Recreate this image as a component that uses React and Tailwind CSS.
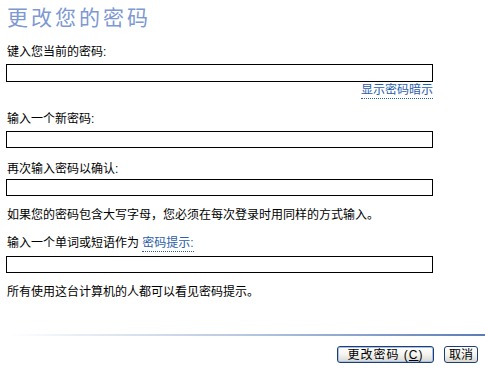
export default function App() {
  const font = { fontFamily: '"Liberation Sans", "Noto Sans CJK SC", sans-serif' };

  return (
    <div
      className="w-[485px] h-[372px] bg-white text-black text-[12px] leading-[14px] overflow-hidden"
      style={font}
    >
      {/* ==== FORM ==== */}
      <div className="pl-[6px] w-[433px]">
        <h1 className="mt-[4px] h-[28px] text-[21px] leading-[28px] tracking-[3px] text-[#7d98d2] font-normal pl-[1px]">
          更改您的密码
        </h1>

        <p className="mt-[13px] pl-[1px]">键入您当前的密码:</p>
        <input className="block mt-[5px] w-[427px] h-[18px] border border-black outline-none" type="password" />

        <div className="flex justify-end mt-[1px]">
          <span className="text-[#2a5ea8] leading-[14px] pb-[1px] border-b border-dotted border-[#2a5ea8] cursor-pointer">
            显示密码暗示
          </span>
        </div>

        <p className="mt-[13px] pl-[1px]">输入一个新密码:</p>
        <input className="block mt-[5px] w-[427px] h-[17px] border border-black outline-none" type="password" />

        <p className="mt-[14px] pl-[1px]">再次输入密码以确认:</p>
        <input className="block mt-[3px] w-[427px] h-[17px] border border-black outline-none" type="password" />

        <p className="mt-[12px] pl-[1px] whitespace-nowrap">
          如果您的密码包含大写字母，您必须在每次登录时用同样的方式输入。
        </p>

        <p className="mt-[14px] pl-[1px] whitespace-nowrap">
          输入一个单词或短语作为{" "}
          <span className="text-[#2a5ea8] pb-[1px] border-b border-dotted border-[#2a5ea8] cursor-pointer">
            密码提示:
          </span>
        </p>
        <input className="block mt-[6px] w-[427px] h-[17px] border border-black outline-none" type="text" />

        <p className="mt-[12px] pl-[1px] whitespace-nowrap">所有使用这台计算机的人都可以看见密码提示。</p>
      </div>

      {/* Divider */}
      <div className="mt-[35px] ml-[8px] h-[2px] bg-gradient-to-r from-white via-[#b7c7e0] to-[#5a7cb6]" />

      {/* Buttons */}
      <div className="flex justify-end gap-[10px] pr-[7px] mt-[10px]">
        <button className="w-[97px] h-[17px] rounded-[3px] border border-[#1e3f72] bg-gradient-to-b from-white via-[#f4f4f0] to-[#d8d8d0] shadow-[inset_0_0_0_1px_#a9c1ea] text-[12px] leading-[14px] tracking-[1px]">
          更改密码 (<span className="underline">C</span>)
        </button>
        <button className="w-[34px] h-[17px] rounded-[3px] border border-[#1e3f72] bg-gradient-to-b from-white via-[#f4f4f0] to-[#d8d8d0] text-[12px] leading-[14px]">
          取消
        </button>
      </div>
    </div>
  );
}
